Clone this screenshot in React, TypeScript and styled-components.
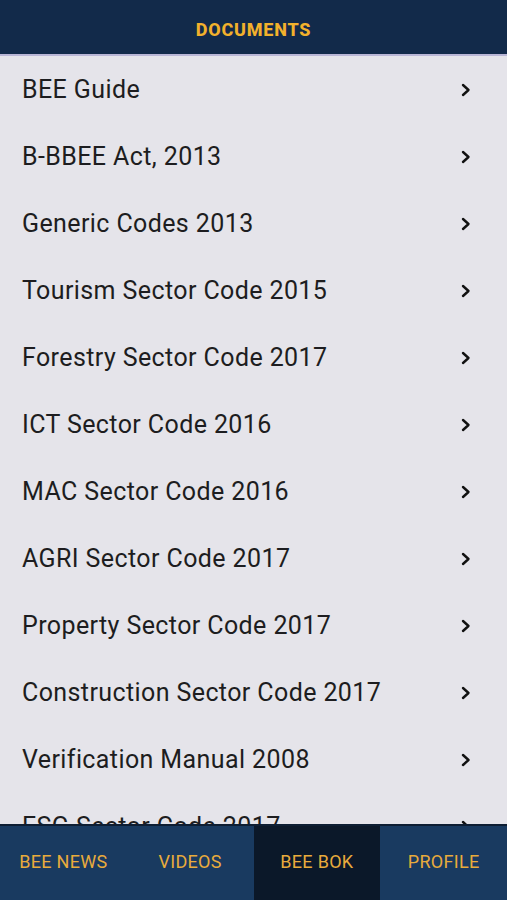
import styled, { createGlobalStyle } from 'styled-components';

const GlobalStyle = createGlobalStyle`
  html, body {
    margin: 0;
    padding: 0;
    background: #e5e4ea;
  }
  * {
    box-sizing: border-box;
  }
`;

const documents = [
  'BEE Guide',
  'B-BBEE Act, 2013',
  'Generic Codes 2013',
  'Tourism Sector Code 2015',
  'Forestry Sector Code 2017',
  'ICT Sector Code 2016',
  'MAC Sector Code 2016',
  'AGRI Sector Code 2017',
  'Property Sector Code 2017',
  'Construction Sector Code 2017',
  'Verification Manual 2008',
  'ESG Sector Code 2017',
];

const tabs = ['BEE NEWS', 'VIDEOS', 'BEE BOK', 'PROFILE'];

const Chevron = () => (
  <svg width="12" height="14" viewBox="0 0 12 14">
    <polyline
      points="3,2 8.5,7 3,12"
      fill="none"
      stroke="#111"
      strokeWidth="2.4"
      strokeLinecap="round"
      strokeLinejoin="round"
    />
  </svg>
);

const App = () => {
  return (
    <Screen>
      <GlobalStyle />
      <Header>DOCUMENTS</Header>
      <List>
        {documents.map((doc) => (
          <Row key={doc}>
            <Label>{doc}</Label>
            <Chevron />
          </Row>
        ))}
      </List>
      <TabBar>
        {tabs.map((tab) => (
          <Tab key={tab} $active={tab === 'BEE BOK'}>
            {tab}
          </Tab>
        ))}
      </TabBar>
    </Screen>
  );
};

export default App;

const Screen = styled.div`
  width: 507px;
  height: 900px;
  display: flex;
  flex-direction: column;
  background: #e5e4ea;
  font-family: Roboto, 'Liberation Sans', sans-serif;
  overflow: hidden;
`;

const Header = styled.div`
  height: 56px;
  flex-shrink: 0;
  display: flex;
  align-items: center;
  justify-content: center;
  background: #122a4a;
  border-bottom: 2px solid #b9b6d6;
  color: #f2b12c;
  font-size: 18px;
  font-weight: 800;
  letter-spacing: 0.8px;
  padding-top: 4px;
`;

const List = styled.div`
  flex: 1;
  overflow: hidden;
  display: flex;
  flex-direction: column;
`;

const Row = styled.div`
  height: 67px;
  flex-shrink: 0;
  display: flex;
  align-items: center;
  justify-content: space-between;
  padding: 0 35px 0 22px;
`;

const Label = styled.div`
  font-size: 25px;
  color: #1d1d20;
  letter-spacing: 0.4px;
`;

const TabBar = styled.div`
  height: 76px;
  flex-shrink: 0;
  display: grid;
  grid-template-columns: repeat(4, 1fr);
  background: #193a60;
  border-top: 2px solid #0e1e33;
`;

const Tab = styled.div<{ $active: boolean }>`
  display: flex;
  align-items: center;
  justify-content: center;
  background: ${({ $active }) => ($active ? '#0b1829' : 'transparent')};
  color: #e8ab3c;
  font-size: 18px;
  letter-spacing: 0.3px;
  padding-bottom: 4px;
`;
